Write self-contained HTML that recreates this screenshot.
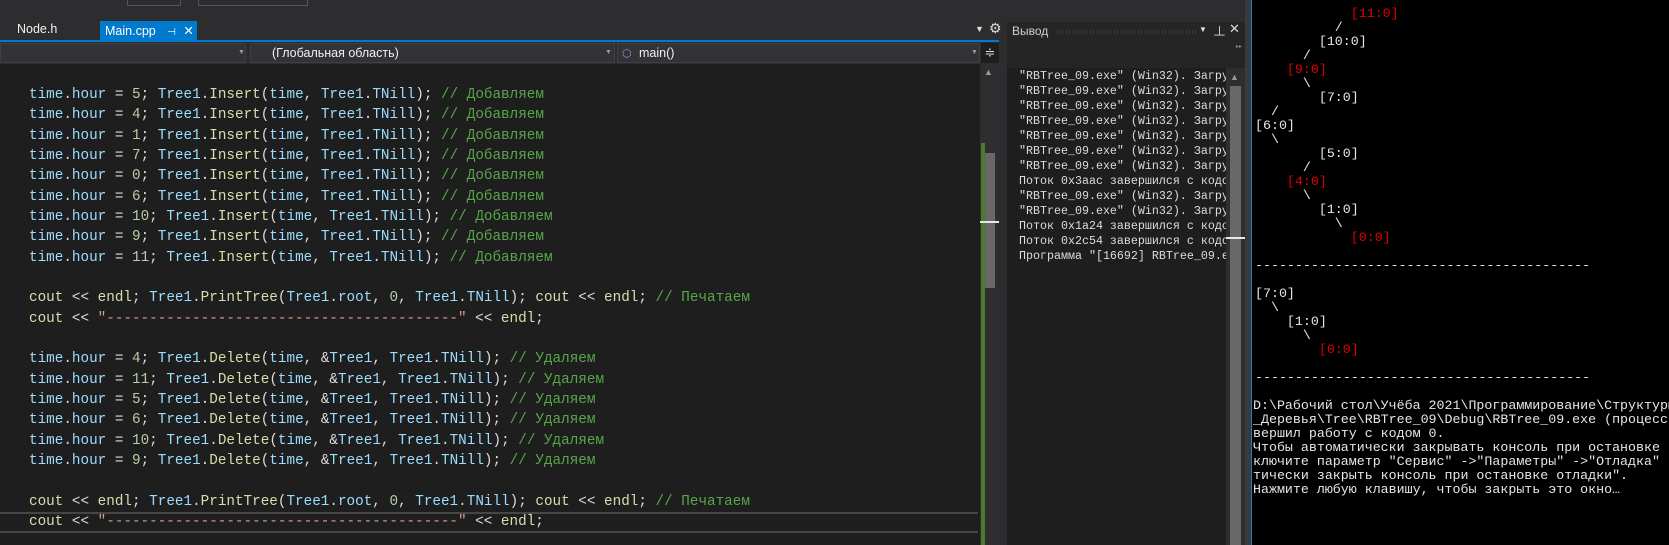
<!DOCTYPE html>
<html><head><meta charset="utf-8"><style>
*{margin:0;padding:0;box-sizing:border-box}
body{width:1669px;height:545px;background:#2d2d30;position:relative;overflow:hidden;font-family:"Liberation Sans","Noto Sans CJK SC",sans-serif}
.abs{position:absolute}
.code{position:absolute;left:29px;top:85px;font-family:"Liberation Mono",monospace;font-size:14.3px;line-height:20.33px;color:#dcdcdc;white-space:pre}
.v{color:#9cdcfe}.f{color:#dcdcaa}.n{color:#b5cea8}.c{color:#57a64a}.s{color:#d69d85}
.out{position:absolute;left:1019px;top:69px;font-family:"Liberation Mono",monospace;font-size:11.67px;line-height:15px;color:#dcdcdc;white-space:pre;width:207px;overflow:hidden}
.con{position:absolute;left:1255px;top:7px;font-family:"Liberation Mono",monospace;font-size:13.3px;line-height:14px;color:#e6e6e6;white-space:pre}
.r{color:#e00000}
</style></head><body>
<div class="abs" style="left:0;top:0;width:1669px;height:8px;background:#2d2d30"></div>
<div class="abs" style="left:127px;top:0;width:54px;height:6px;border:1px solid #555;border-top:none"></div>
<div class="abs" style="left:198px;top:0;width:110px;height:6px;border:1px solid #555;border-top:none"></div>
<div class="abs" style="left:17px;top:22px;font-size:12.5px;color:#f1f1f1">Node.h</div>
<div class="abs" style="left:100px;top:21px;width:97px;height:20px;background:#007acc;color:#fff;font-size:12.5px;padding:2px 0 0 5px">Main.cpp <span style="font-size:10px;margin-left:8px">⊣</span> <span style="margin-left:4px">✕</span></div>
<div class="abs" style="left:975px;top:24px;color:#ddd;font-size:9px">▼</div>
<div class="abs" style="left:989px;top:20px;color:#ddd;font-size:14px">⚙</div>
<div class="abs" style="left:0;top:40px;width:999px;height:2px;background:#007acc"></div>
<div class="abs" style="left:0;top:42px;width:999px;height:22px;background:#2d2d30"></div>
<div class="abs" style="left:0;top:43px;width:246px;height:20px;background:#333337;border:1px solid #3f3f46"></div>
<div class="abs" style="left:238px;top:49px;color:#999;font-size:7px">▼</div>
<div class="abs" style="left:250px;top:43px;width:365px;height:20px;background:#333337;border:1px solid #3f3f46;color:#f1f1f1;font-size:12.5px;padding:2px 0 0 21px">(Глобальная область)</div>
<div class="abs" style="left:605px;top:49px;color:#999;font-size:7px">▼</div>
<div class="abs" style="left:617px;top:43px;width:363px;height:20px;background:#333337;border:1px solid #3f3f46;color:#f1f1f1;font-size:12.5px;padding:2px 0 0 21px">main()</div>
<div class="abs" style="left:622px;top:47px;color:#b180d7;font-size:11px">⬡</div>
<div class="abs" style="left:971px;top:49px;color:#999;font-size:7px">▼</div>
<div class="abs" style="left:981px;top:43px;width:18px;height:20px;background:#1e1e1e;color:#ddd;font-size:13px;text-align:center;line-height:20px">≑</div>
<div class="abs" style="left:0;top:64px;width:980px;height:481px;background:#1e1e1e"></div>
<div class="abs" style="left:0;top:512px;width:978px;height:21px;border-top:2px solid #464646;border-bottom:2px solid #464646"></div>
<div class="abs" style="left:980px;top:64px;width:19px;height:481px;background:#2e2e30"></div>
<div class="abs" style="left:984px;top:67px;color:#999;font-size:9px">▲</div>
<div class="abs" style="left:981px;top:143px;width:4px;height:402px;background:#4b7a2d"></div>
<div class="abs" style="left:985px;top:153px;width:10px;height:135px;background:#686868"></div>
<div class="abs" style="left:980px;top:221px;width:19px;height:2px;background:#e8e8e8"></div>
<div class="code"><span class="v">time</span>.<span class="v">hour</span> = <span class="n">5</span>; <span class="v">Tree1</span>.<span class="f">Insert</span>(<span class="v">time</span>, <span class="v">Tree1</span>.<span class="v">TNill</span>); <span class="c">// Добавляем</span>
<span class="v">time</span>.<span class="v">hour</span> = <span class="n">4</span>; <span class="v">Tree1</span>.<span class="f">Insert</span>(<span class="v">time</span>, <span class="v">Tree1</span>.<span class="v">TNill</span>); <span class="c">// Добавляем</span>
<span class="v">time</span>.<span class="v">hour</span> = <span class="n">1</span>; <span class="v">Tree1</span>.<span class="f">Insert</span>(<span class="v">time</span>, <span class="v">Tree1</span>.<span class="v">TNill</span>); <span class="c">// Добавляем</span>
<span class="v">time</span>.<span class="v">hour</span> = <span class="n">7</span>; <span class="v">Tree1</span>.<span class="f">Insert</span>(<span class="v">time</span>, <span class="v">Tree1</span>.<span class="v">TNill</span>); <span class="c">// Добавляем</span>
<span class="v">time</span>.<span class="v">hour</span> = <span class="n">0</span>; <span class="v">Tree1</span>.<span class="f">Insert</span>(<span class="v">time</span>, <span class="v">Tree1</span>.<span class="v">TNill</span>); <span class="c">// Добавляем</span>
<span class="v">time</span>.<span class="v">hour</span> = <span class="n">6</span>; <span class="v">Tree1</span>.<span class="f">Insert</span>(<span class="v">time</span>, <span class="v">Tree1</span>.<span class="v">TNill</span>); <span class="c">// Добавляем</span>
<span class="v">time</span>.<span class="v">hour</span> = <span class="n">10</span>; <span class="v">Tree1</span>.<span class="f">Insert</span>(<span class="v">time</span>, <span class="v">Tree1</span>.<span class="v">TNill</span>); <span class="c">// Добавляем</span>
<span class="v">time</span>.<span class="v">hour</span> = <span class="n">9</span>; <span class="v">Tree1</span>.<span class="f">Insert</span>(<span class="v">time</span>, <span class="v">Tree1</span>.<span class="v">TNill</span>); <span class="c">// Добавляем</span>
<span class="v">time</span>.<span class="v">hour</span> = <span class="n">11</span>; <span class="v">Tree1</span>.<span class="f">Insert</span>(<span class="v">time</span>, <span class="v">Tree1</span>.<span class="v">TNill</span>); <span class="c">// Добавляем</span>

<span class="f">cout</span> &lt;&lt; <span class="f">endl</span>; <span class="v">Tree1</span>.<span class="f">PrintTree</span>(<span class="v">Tree1</span>.<span class="v">root</span>, <span class="n">0</span>, <span class="v">Tree1</span>.<span class="v">TNill</span>); <span class="f">cout</span> &lt;&lt; <span class="f">endl</span>; <span class="c">// Печатаем</span>
<span class="f">cout</span> &lt;&lt; <span class="s">"-----------------------------------------"</span> &lt;&lt; <span class="f">endl</span>;

<span class="v">time</span>.<span class="v">hour</span> = <span class="n">4</span>; <span class="v">Tree1</span>.<span class="f">Delete</span>(<span class="v">time</span>, &amp;<span class="v">Tree1</span>, <span class="v">Tree1</span>.<span class="v">TNill</span>); <span class="c">// Удаляем</span>
<span class="v">time</span>.<span class="v">hour</span> = <span class="n">11</span>; <span class="v">Tree1</span>.<span class="f">Delete</span>(<span class="v">time</span>, &amp;<span class="v">Tree1</span>, <span class="v">Tree1</span>.<span class="v">TNill</span>); <span class="c">// Удаляем</span>
<span class="v">time</span>.<span class="v">hour</span> = <span class="n">5</span>; <span class="v">Tree1</span>.<span class="f">Delete</span>(<span class="v">time</span>, &amp;<span class="v">Tree1</span>, <span class="v">Tree1</span>.<span class="v">TNill</span>); <span class="c">// Удаляем</span>
<span class="v">time</span>.<span class="v">hour</span> = <span class="n">6</span>; <span class="v">Tree1</span>.<span class="f">Delete</span>(<span class="v">time</span>, &amp;<span class="v">Tree1</span>, <span class="v">Tree1</span>.<span class="v">TNill</span>); <span class="c">// Удаляем</span>
<span class="v">time</span>.<span class="v">hour</span> = <span class="n">10</span>; <span class="v">Tree1</span>.<span class="f">Delete</span>(<span class="v">time</span>, &amp;<span class="v">Tree1</span>, <span class="v">Tree1</span>.<span class="v">TNill</span>); <span class="c">// Удаляем</span>
<span class="v">time</span>.<span class="v">hour</span> = <span class="n">9</span>; <span class="v">Tree1</span>.<span class="f">Delete</span>(<span class="v">time</span>, &amp;<span class="v">Tree1</span>, <span class="v">Tree1</span>.<span class="v">TNill</span>); <span class="c">// Удаляем</span>

<span class="f">cout</span> &lt;&lt; <span class="f">endl</span>; <span class="v">Tree1</span>.<span class="f">PrintTree</span>(<span class="v">Tree1</span>.<span class="v">root</span>, <span class="n">0</span>, <span class="v">Tree1</span>.<span class="v">TNill</span>); <span class="f">cout</span> &lt;&lt; <span class="f">endl</span>; <span class="c">// Печатаем</span>
<span class="f">cout</span> &lt;&lt; <span class="s">"-----------------------------------------"</span> &lt;&lt; <span class="f">endl</span>;</div>
<div class="abs" style="left:1007px;top:22px;width:238px;height:523px;background:#252526"></div>
<div class="abs" style="left:1012px;top:24px;font-size:12px;color:#d0d0d0">Вывод</div>
<div class="abs" style="left:1056px;top:30px;width:140px;height:4px;background-image:radial-gradient(#4a4a4e 30%,transparent 31%);background-size:3px 2px"></div>
<div class="abs" style="left:1199px;top:25px;color:#ddd;font-size:8px">▼</div>
<div class="abs" style="left:1213px;top:21px;color:#ddd;font-size:13px">⊥</div>
<div class="abs" style="left:1229px;top:21px;color:#ddd;font-size:13px">✕</div>
<div class="abs" style="left:1236px;top:43px;color:#888;font-size:6px">▸▸</div>
<div class="abs" style="left:1007px;top:68px;width:219px;height:477px;background:#1e1e1e"></div>
<div class="abs" style="left:1226px;top:68px;width:19px;height:477px;background:#2e2e30"></div>
<div class="abs" style="left:1230px;top:72px;color:#999;font-size:9px">▲</div>
<div class="abs" style="left:1230px;top:86px;width:11px;height:459px;background:#686868"></div>
<div class="abs" style="left:1226px;top:237px;width:19px;height:2px;background:#e8e8e8"></div>
<div class="out">"RBTree_09.exe" (Win32). Загру
"RBTree_09.exe" (Win32). Загру
"RBTree_09.exe" (Win32). Загру
"RBTree_09.exe" (Win32). Загру
"RBTree_09.exe" (Win32). Загру
"RBTree_09.exe" (Win32). Загру
"RBTree_09.exe" (Win32). Загру
Поток 0x3aac завершился с кодо
"RBTree_09.exe" (Win32). Загру
"RBTree_09.exe" (Win32). Загру
Поток 0x1a24 завершился с кодо
Поток 0x2c54 завершился с кодо
Программа "[16692] RBTree_09.e</div>
<div class="abs" style="left:1245px;top:0;width:6px;height:545px;background:#3a3a3e"></div>
<div class="abs" style="left:1251px;top:0;width:418px;height:545px;background:#000;border-left:1px solid #1c7bd0"></div>
<div class="con">            <span class="r">[11:0]</span>
          /
        [10:0]
      /
    <span class="r">[9:0]</span>
      \
        [7:0]
  /
[6:0]
  \
        [5:0]
      /
    <span class="r">[4:0]</span>
      \
        [1:0]
          \
            <span class="r">[0:0]</span>

------------------------------------------

[7:0]
  \
    [1:0]
      \
        <span class="r">[0:0]</span>

------------------------------------------
</div>
<div class="con" style="left:1253px;top:399px;width:416px;overflow:hidden">D:\Рабочий стол\Учёба 2021\Программирование\Структуры
_Деревья\Tree\RBTree_09\Debug\RBTree_09.exe (процесс
вершил работу с кодом 0.
Чтобы автоматически закрывать консоль при остановке
ключите параметр "Сервис" -&gt;"Параметры" -&gt;"Отладка"
тически закрыть консоль при остановке отладки".
Нажмите любую клавишу, чтобы закрыть это окно…</div>
</body></html>
